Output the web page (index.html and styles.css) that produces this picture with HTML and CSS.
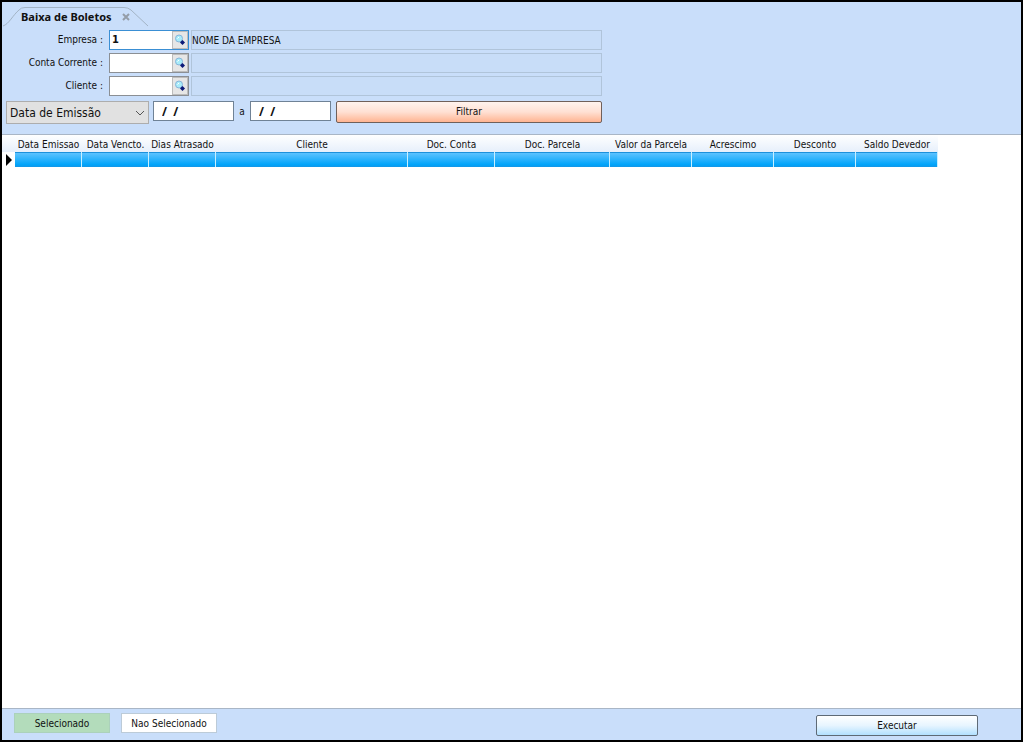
FILE: index.html
```html
<!DOCTYPE html>
<html lang="pt-BR">
<head>
<meta charset="utf-8">
<title>Baixa de Boletos</title>
<link rel="stylesheet" href="styles.css">
</head>
<body>
<svg class="symbols" aria-hidden="true">
  <symbol id="lens" viewBox="0 0 12 12">
    <path d="M6.500 6.500L9 9" stroke="#10207c" stroke-width="2"/>
    <circle cx="5" cy="4.500" r="3.500" fill="#a8ecfa" stroke="#86b4da"/>
    <path d="M3.500 4.500L5 3" stroke="#fff"/>
    <path d="M8.500 6L11 8.500L8.500 11L6 8.500Z" fill="#0c1a78"/>
  </symbol>
</svg>
<div class="window">
  <header class="tabs">
    <div class="tab">
      <svg class="tab-shape" viewBox="0 0 146 20" aria-hidden="true"><path d="M0 19C6 17 10 8 16 3Q18 .5 22 .5H121Q125 .5 128 3L145 19" fill="none" stroke="#a3b4c6"/></svg>
      <span class="tab-title">Baixa de Boletos</span>
      <button class="tab-close" type="button" aria-label="Fechar"><svg viewBox="0 0 8 8"><path d="M1 1L7 7M7 1L1 7" stroke="#949da8" stroke-width="2"/></svg></button>
    </div>
  </header>
  <form class="filters">
    <div class="row">
      <label for="empresa">Empresa :</label>
      <div class="lookup active"><input id="empresa" type="text" value="1"><button type="button" aria-label="Buscar empresa"><svg><use href="#lens"/></svg></button></div>
      <input class="description" type="text" value="NOME DA EMPRESA" aria-label="Nome da empresa" readonly>
    </div>
    <div class="row">
      <label for="conta">Conta Corrente :</label>
      <div class="lookup"><input id="conta" type="text"><button type="button" aria-label="Buscar conta"><svg><use href="#lens"/></svg></button></div>
      <input class="description" type="text" aria-label="Nome da conta" readonly>
    </div>
    <div class="row">
      <label for="cliente">Cliente :</label>
      <div class="lookup"><input id="cliente" type="text"><button type="button" aria-label="Buscar cliente"><svg><use href="#lens"/></svg></button></div>
      <input class="description" type="text" aria-label="Nome do cliente" readonly>
    </div>
    <div class="period">
      <div class="select">
        <select aria-label="Tipo de data"><option>Data de Emissão</option></select>
        <svg class="chevron" viewBox="0 0 10 6" aria-hidden="true"><path d="M1 1L5 5L9 1" fill="none" stroke="#555"/></svg>
      </div>
      <input class="date" id="inicio" type="text" value="/  /" aria-label="Data inicial">
      <label class="until" for="fim">a</label>
      <input class="date" id="fim" type="text" value="/  /">
      <button class="filter-button" type="button">Filtrar</button>
    </div>
  </form>
  <main class="grid">
    <table>
      <colgroup><col class="marker"><col class="day"><col class="day"><col class="day"><col class="client"><col class="account"><col class="parcel"><col class="money"><col class="money"><col class="money"><col class="money"></colgroup>
      <thead><tr><th></th><th>Data Emissao</th><th>Data Vencto.</th><th>Dias Atrasado</th><th>Cliente</th><th>Doc. Conta</th><th>Doc. Parcela</th><th>Valor da Parcela</th><th>Acrescimo</th><th>Desconto</th><th>Saldo Devedor</th></tr></thead>
      <tbody><tr><td><svg class="arrow" viewBox="0 0 6 12"><path d="M0 0L6 6L0 12Z"/></svg></td><td></td><td></td><td></td><td></td><td></td><td></td><td></td><td></td><td></td><td></td></tr></tbody>
    </table>
  </main>
  <footer class="footer">
    <div class="legend"><span class="key selected">Selecionado</span><span class="key">Nao Selecionado</span></div>
    <button class="run-button" type="button">Executar</button>
  </footer>
</div>
</body>
</html>
```
FILE: styles.css
```css
* { box-sizing: border-box; }
body { margin: 0; font: 10px/14px "DejaVu Sans Condensed", "Noto Sans", sans-serif; color: #111; }
button, input, select { font: inherit; color: inherit; margin: 0; padding: 0; border-radius: 0; }
svg { display: block; }
.symbols { position: absolute; width: 0; height: 0; }
.window { display: flex; flex-direction: column; min-height: 100vh; border: 2px solid #000; background: #c9defa; }

.tabs { padding: 5px 0 0 1px; }
.tab { position: relative; display: flex; align-items: center; gap: 10px; width: 146px; height: 20px; padding-left: 18px; }
.tab-shape { position: absolute; inset: 0; width: 146px; height: 20px; }
.tab-title { position: relative; font-family: "Noto Sans", sans-serif; font-size: 11px; font-weight: bold; white-space: nowrap; }
.tab-close { position: relative; border: 0; background: none; }
.tab-close svg { width: 8px; height: 8px; }

.filters { display: flex; flex-direction: column; gap: 3px; max-width: 600px; padding: 3px 0 10px 4px; }
.row { display: flex; align-items: center; height: 20px; }
.row label { flex: 0 0 97px; margin-right: 6px; text-align: right; }
.lookup { display: flex; flex: 0 0 80px; min-width: 0; height: 20px; border: 1px solid #8b8f94; background: #fff; }
.lookup.active { border-color: #3a8fd4; }
.lookup input { flex: 1; width: 0; min-width: 0; padding-left: 2px; border: 0; outline: 0; background: none; font-size: 11px; font-weight: bold; }
.lookup button { display: flex; flex: 0 0 16px; align-items: center; justify-content: center; border: 1px solid #bcbcbc; background: #e6e6e6; }
.lookup button svg { flex: none; width: 12px; height: 12px; }
.description { flex: 1; min-width: 0; height: 20px; margin-left: 2px; border: 1px solid #b0c4da; outline: 0; background: #c8ddf8; }

.period { display: flex; align-items: flex-start; padding-top: 2px; }
.select { position: relative; flex: 0 0 143px; margin-right: 4px; }
.select select { display: block; width: 100%; height: 23px; padding-left: 3px; border: 1px solid #adadad; background: #e1e1e1; font-size: 12px; appearance: none; }
.chevron { position: absolute; right: 4px; top: 9px; width: 10px; height: 6px; }
.date { width: 81px; height: 20px; padding-left: 8px; border: 1px solid #6f8296; background: #fff; font-family: "Noto Sans", sans-serif; font-size: 12px; font-weight: bold; white-space: pre; }
.until { width: 16px; padding-top: 4px; text-align: center; }
.filter-button { flex: 1; height: 22px; margin-left: 5px; border: 1px solid #70605a; border-radius: 2px; background: linear-gradient(#fff3ee, #ffe0d3 50%, #ffb492); }

.grid { flex: 1; border-top: 1px solid #a9b6c6; border-bottom: 1px solid #a9b6c6; background: #fff; overflow: auto; }
table { width: 936px; table-layout: fixed; border-collapse: separate; border-spacing: 0; }
.marker { width: 13px; }
.day { width: 67px; }
.client { width: 192px; }
.account { width: 87px; }
.parcel { width: 115px; }
.money { width: 82px; }
th { height: 17px; padding: 2px 0 0; background: linear-gradient(#fff, #e6effb); font-weight: normal; line-height: 14px; white-space: nowrap; }
td { height: 15px; padding: 0; border-right: 1px solid #c8efff; background: linear-gradient(#1c91dc 0 1px, #5cc2ff 1px, #00a4fa 85%, #1596e6); }
td:first-child { padding-left: 4px; border: 0; background: #fff; }
.arrow { width: 6px; height: 12px; }

.footer { display: flex; justify-content: space-between; align-items: flex-start; padding: 4px 43px 4px 12px; }
.legend { display: flex; gap: 11px; }
.key { width: 96px; height: 20px; border: 1px solid #bccbd8; background: #fff; line-height: 19px; text-align: center; }
.key.selected { background: #b3dcbb; border-color: #abd1bb; }
.run-button { width: 162px; height: 21px; margin-top: 2px; border: 1px solid #5e6a76; border-radius: 2px; background: linear-gradient(#fff, #e7f5ff 50%, #b2e0ff); }
```
